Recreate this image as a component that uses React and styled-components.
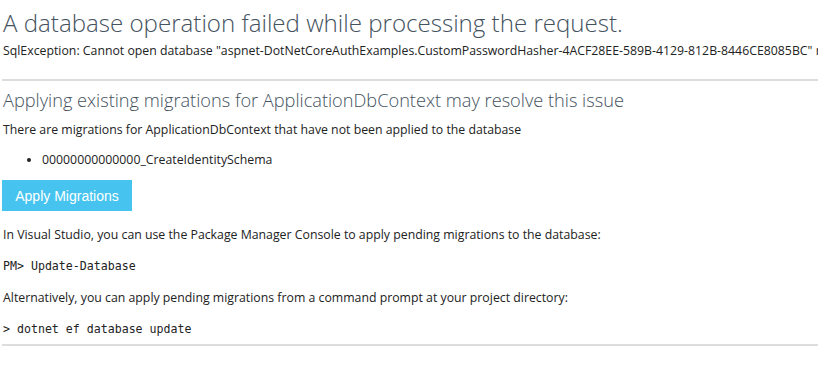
import styled, { createGlobalStyle } from 'styled-components';

const GlobalStyle = createGlobalStyle`
  html, body {
    margin: 0;
    padding: 0;
    background: #fff;
    overflow: hidden;
  }
  body {
    font-family: 'Open Sans', 'Noto Sans', sans-serif;
    font-size: 12.3px;
    color: #222;
  }
`;

const Page = styled.main`
  padding: 0 0 0 3px;
`;

const Title = styled.h1`
  margin: 0;
  padding-top: 6px;
  font-family: 'Open Sans', sans-serif;
  font-weight: 300;
  font-size: 24.1px;
  line-height: 34px;
  color: #44525e;
  white-space: nowrap;
`;

const ErrorText = styled.p`
  margin: 2px 0 0;
  line-height: 18px;
  white-space: nowrap;
`;

const Rule = styled.hr`
  margin: ${({ $top }) => $top}px 0 0 -1px;
  height: 2px;
  border: none;
  background: #ddd;
`;

const Heading = styled.h2`
  margin: 6px 0 0;
  font-family: 'Open Sans', sans-serif;
  font-weight: 300;
  font-size: 18.2px;
  line-height: 26px;
  color: #44525e;
  white-space: nowrap;
`;

const Text = styled.p`
  margin: ${({ $top }) => $top}px 0 0;
  line-height: 18px;
  white-space: nowrap;
`;

const List = styled.ul`
  margin: 12px 0 0;
  padding-left: 39px;
  line-height: 18px;
`;

const Button = styled.button`
  display: block;
  margin: 11px 0 0 -1px;
  width: 130px;
  height: 31px;
  padding: 0;
  border: none;
  background: #46c4ef;
  color: #fff;
  font-family: 'Liberation Sans', Arial, sans-serif;
  font-size: 14px;
`;

const Code = styled.code`
  display: block;
  margin-top: ${({ $top }) => $top}px;
  font-family: 'DejaVu Sans Mono', 'Liberation Mono', monospace;
  font-size: 11.6px;
  line-height: 18px;
  color: #222;
`;

export default function App() {
  return (
    <>
      <GlobalStyle />
      <Page>
        <Title>A database operation failed while processing the request.</Title>
        <ErrorText>
          SqlException: Cannot open database "aspnet-DotNetCoreAuthExamples.CustomPasswordHasher-4ACF28EE-589B-4129-812B-8446CE8085BC" requested by the login. The login failed.
        </ErrorText>
        <Rule $top={19} />
        <Heading>Applying existing migrations for ApplicationDbContext may resolve this issue</Heading>
        <Text $top={8}>There are migrations for ApplicationDbContext that have not been applied to the database</Text>
        <List>
          <li>00000000000000_CreateIdentitySchema</li>
        </List>
        <Button>Apply Migrations</Button>
        <Text $top={15}>In Visual Studio, you can use the Package Manager Console to apply pending migrations to the database:</Text>
        <Code $top={13}>PM&gt; Update-Database</Code>
        <Text $top={14}>Alternatively, you can apply pending migrations from a command prompt at your project directory:</Text>
        <Code $top={13}>&gt; dotnet ef database update</Code>
        <Rule $top={6} />
      </Page>
    </>
  );
}
